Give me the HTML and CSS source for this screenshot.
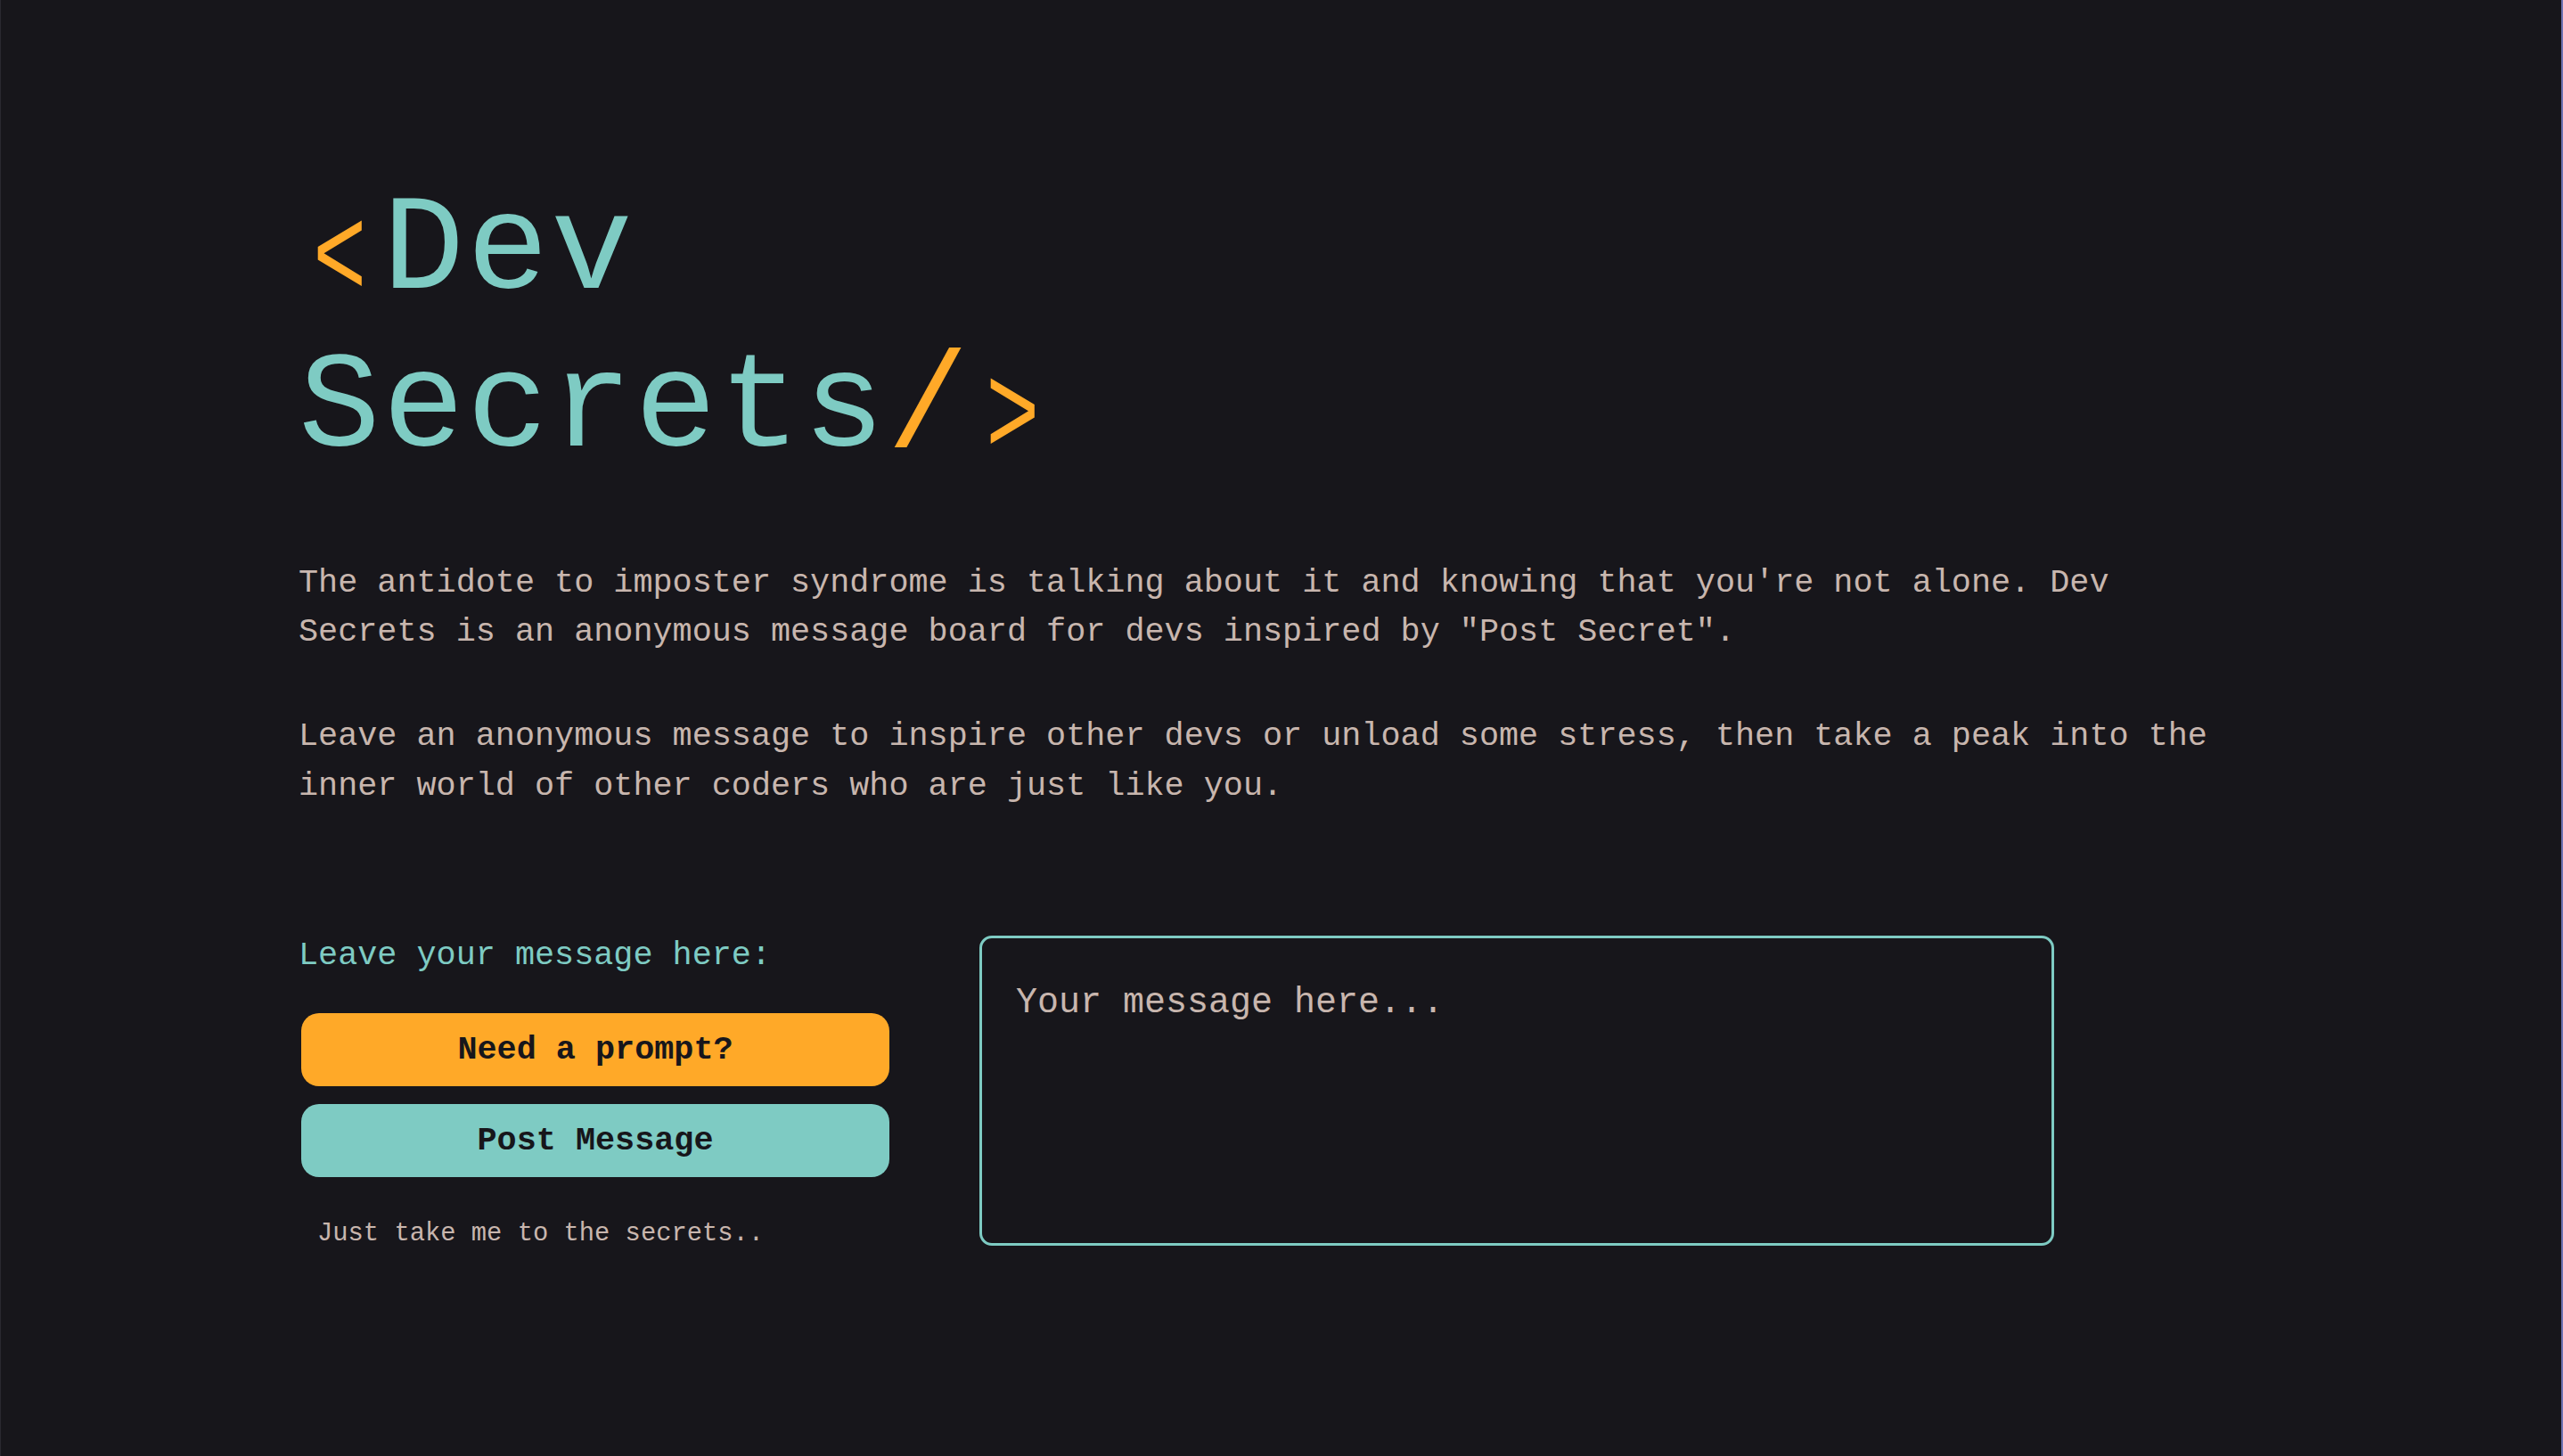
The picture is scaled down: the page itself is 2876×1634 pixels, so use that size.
FILE: index.html
```html
<!DOCTYPE html>
<html lang="en">
<head>
<meta charset="utf-8">
<title>Dev Secrets</title>
<link rel="stylesheet" href="styles.css">
</head>
<body>
<main class="page">
  <h1 class="title"><span class="accent chevron">&lt;</span>Dev<br>Secrets<span class="accent">/</span><span class="accent chevron">&gt;</span></h1>
  <p class="intro">The antidote to imposter syndrome is talking about it and knowing that you're not alone. Dev Secrets is an anonymous message board for devs inspired by "Post Secret".</p>
  <p class="intro second">Leave an anonymous message to inspire other devs or unload some stress, then take a peak into the inner world of other coders who are just like you.</p>
  <section class="compose">
    <div class="controls">
      <label class="label" for="msg">Leave your message here:</label>
      <button class="btn btn-prompt" type="button">Need a prompt?</button>
      <button class="btn btn-post" type="button">Post Message</button>
      <a class="skip" href="#">Just take me to the secrets..</a>
    </div>
    <textarea id="msg" class="message" placeholder="Your message here..."></textarea>
  </section>
</main>
</body>
</html>
```
FILE: styles.css
```css
html, body {
  margin: 0;
  padding: 0;
  background: #17161b;
}
body {
  min-height: 100vh;
  box-sizing: border-box;
  border-left: 1px solid #2a2930;
  border-right: 2px solid #6e72b0;
  font-family: "Liberation Mono", "DejaVu Sans Mono", monospace;
  color: #c8b6ae;
}
.page {
  padding: 194px 0 0 334px;
  width: 2170px;
}
.title {
  margin: 0;
  font-family: "Liberation Mono", monospace;
  font-weight: normal;
  font-size: 153px;
  line-height: 177px;
  letter-spacing: 2.5px;
  color: #7ecbc3;
}
.accent {
  color: #ffa928;
}
.chevron {
  display: inline-block;
  transform: translateY(11px) scale(0.66, 0.95);
}
.intro {
  margin: 79px 0 0 0;
  font-size: 36.8px;
  line-height: 55.2px;
}
.intro.second {
  margin-top: 62px;
}
.compose {
  display: flex;
  align-items: flex-start;
  gap: 101px;
  margin-top: 135px;
}
.controls {
  width: 663px;
  display: flex;
  flex-direction: column;
  align-items: stretch;
}
.label {
  font-size: 36.8px;
  line-height: 55.2px;
  color: #7ecbc3;
}
.btn {
  margin: 0 0 0 3px;
  height: 82px;
  border: none;
  border-radius: 20px;
  font-family: "Liberation Mono", monospace;
  font-weight: bold;
  font-size: 36.8px;
  color: #17161b;
  cursor: pointer;
}
.btn-prompt {
  margin-top: 37px;
  background: #ffa928;
}
.btn-post {
  margin-top: 20px;
  background: #7ecbc3;
}
.skip {
  margin-top: 42px;
  padding-left: 21px;
  font-size: 28.8px;
  line-height: 43.2px;
  color: #c8b6ae;
  text-decoration: none;
}
.message {
  box-sizing: border-box;
  margin: 5px 0 0 0;
  width: 1206px;
  height: 348px;
  padding: 50px 38px;
  background: #17161b;
  border: 3px solid #7ecbc3;
  border-radius: 14px;
  font-family: "Liberation Mono", monospace;
  font-size: 40px;
  color: #c8b6ae;
  resize: none;
  outline: none;
}
.message::placeholder {
  color: #c8b6ae;
  opacity: 1;
}
```
